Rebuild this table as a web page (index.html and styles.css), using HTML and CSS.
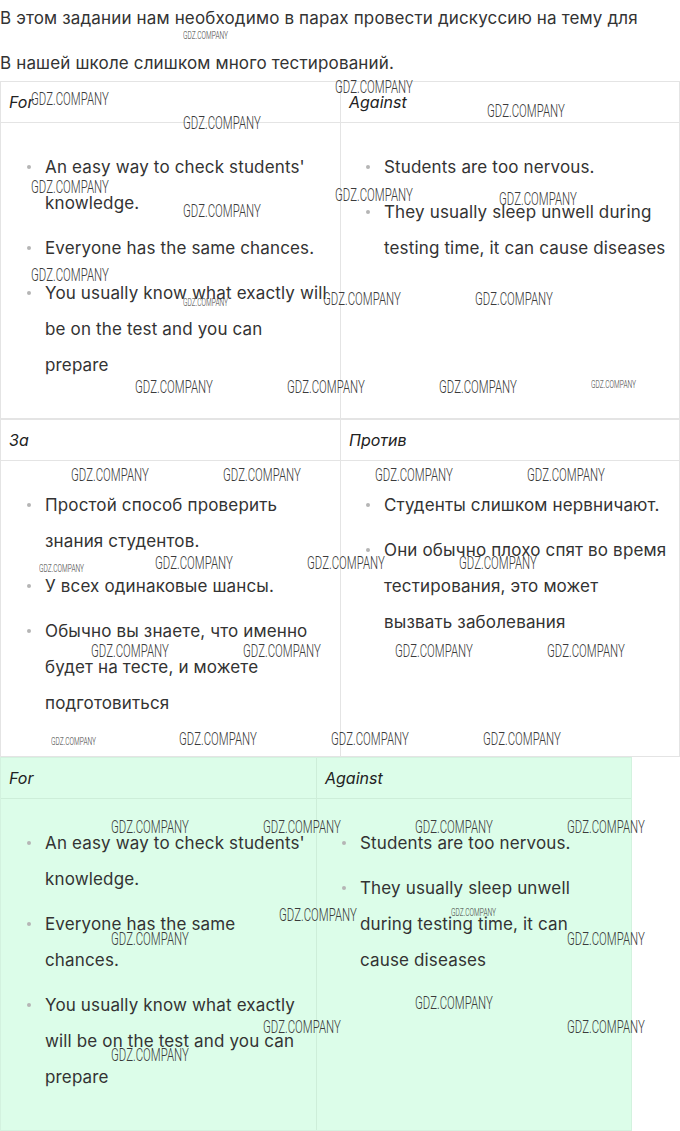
FILE: index.html
```html
<!DOCTYPE html>
<html lang="ru">
<head>
<meta charset="utf-8">
<title>Discussion</title>
<link rel="stylesheet" href="styles.css">
</head>
<body>
<div class="page">
  <p class="intro">В этом задании нам необходимо в парах провести дискуссию на тему для</p>
  <p class="intro">В нашей школе слишком много тестирований.</p>

  <div class="table">
    <div class="th">For</div>
    <div class="th">Against</div>
    <div class="td">
      <ul>
        <li>An easy way to check students' knowledge.</li>
        <li>Everyone has the same chances.</li>
        <li>You usually know what exactly will be on the test and you can prepare</li>
      </ul>
    </div>
    <div class="td">
      <ul>
        <li>Students are too nervous.</li>
        <li>They usually sleep unwell during testing time, it can cause diseases</li>
      </ul>
    </div>
  </div>

  <div class="table">
    <div class="th">За</div>
    <div class="th">Против</div>
    <div class="td">
      <ul>
        <li>Простой способ проверить знания студентов.</li>
        <li>У всех одинаковые шансы.</li>
        <li>Обычно вы знаете, что именно будет на тесте, и можете подготовиться</li>
      </ul>
    </div>
    <div class="td">
      <ul>
        <li>Студенты слишком нервничают.</li>
        <li>Они обычно плохо спят во время тестирования, это может вызвать заболевания</li>
      </ul>
    </div>
  </div>

  <div class="table table-green">
    <div class="th">For</div>
    <div class="th">Against</div>
    <div class="td">
      <ul>
        <li>An easy way to check students' knowledge.</li>
        <li>Everyone has the same chances.</li>
        <li>You usually know what exactly will be on the test and you can prepare</li>
      </ul>
    </div>
    <div class="td">
      <ul>
        <li>Students are too nervous.</li>
        <li>They usually sleep unwell during testing time, it can cause diseases</li>
      </ul>
    </div>
  </div>

  <div class="marks">
    <span class="wm sm" style="left:183px;top:31px">GDZ.COMPANY</span>
    <span class="wm" style="left:31px;top:91px">GDZ.COMPANY</span>
    <span class="wm" style="left:335px;top:79px">GDZ.COMPANY</span>
    <span class="wm" style="left:183px;top:115px">GDZ.COMPANY</span>
    <span class="wm" style="left:487px;top:103px">GDZ.COMPANY</span>
    <span class="wm" style="left:31px;top:179px">GDZ.COMPANY</span>
    <span class="wm" style="left:183px;top:203px">GDZ.COMPANY</span>
    <span class="wm" style="left:335px;top:187px">GDZ.COMPANY</span>
    <span class="wm" style="left:499px;top:191px">GDZ.COMPANY</span>
    <span class="wm" style="left:31px;top:267px">GDZ.COMPANY</span>
    <span class="wm sm" style="left:183px;top:298px">GDZ.COMPANY</span>
    <span class="wm" style="left:323px;top:291px">GDZ.COMPANY</span>
    <span class="wm" style="left:475px;top:291px">GDZ.COMPANY</span>
    <span class="wm" style="left:135px;top:379px">GDZ.COMPANY</span>
    <span class="wm" style="left:287px;top:379px">GDZ.COMPANY</span>
    <span class="wm" style="left:439px;top:379px">GDZ.COMPANY</span>
    <span class="wm sm" style="left:591px;top:380px">GDZ.COMPANY</span>
    <span class="wm" style="left:71px;top:467px">GDZ.COMPANY</span>
    <span class="wm" style="left:223px;top:467px">GDZ.COMPANY</span>
    <span class="wm" style="left:375px;top:467px">GDZ.COMPANY</span>
    <span class="wm" style="left:527px;top:467px">GDZ.COMPANY</span>
    <span class="wm sm" style="left:39px;top:564px">GDZ.COMPANY</span>
    <span class="wm" style="left:155px;top:555px">GDZ.COMPANY</span>
    <span class="wm" style="left:307px;top:555px">GDZ.COMPANY</span>
    <span class="wm" style="left:459px;top:555px">GDZ.COMPANY</span>
    <span class="wm" style="left:91px;top:643px">GDZ.COMPANY</span>
    <span class="wm" style="left:243px;top:643px">GDZ.COMPANY</span>
    <span class="wm" style="left:395px;top:643px">GDZ.COMPANY</span>
    <span class="wm" style="left:547px;top:643px">GDZ.COMPANY</span>
    <span class="wm sm" style="left:51px;top:737px">GDZ.COMPANY</span>
    <span class="wm" style="left:179px;top:731px">GDZ.COMPANY</span>
    <span class="wm" style="left:331px;top:731px">GDZ.COMPANY</span>
    <span class="wm" style="left:483px;top:731px">GDZ.COMPANY</span>
    <span class="wm" style="left:111px;top:819px">GDZ.COMPANY</span>
    <span class="wm" style="left:263px;top:819px">GDZ.COMPANY</span>
    <span class="wm" style="left:415px;top:819px">GDZ.COMPANY</span>
    <span class="wm" style="left:567px;top:819px">GDZ.COMPANY</span>
    <span class="wm" style="left:279px;top:907px">GDZ.COMPANY</span>
    <span class="wm sm" style="left:451px;top:908px">GDZ.COMPANY</span>
    <span class="wm" style="left:111px;top:931px">GDZ.COMPANY</span>
    <span class="wm" style="left:567px;top:931px">GDZ.COMPANY</span>
    <span class="wm" style="left:415px;top:995px">GDZ.COMPANY</span>
    <span class="wm" style="left:263px;top:1019px">GDZ.COMPANY</span>
    <span class="wm" style="left:567px;top:1019px">GDZ.COMPANY</span>
    <span class="wm" style="left:111px;top:1047px">GDZ.COMPANY</span>
  </div>
</div>
</body>
</html>
```

FILE: styles.css
```css
html, body {
  margin: 0;
  padding: 0;
  background: #ffffff;
}

.page {
  position: relative;
  width: 680px;
  font-family: Inter, "Noto Sans", sans-serif;
  font-size: 17px;
  letter-spacing: 0.15px;
  color: #333333;
}

.intro {
  margin: 0 0 9px 0;
  line-height: 36px;
  white-space: nowrap;
}

.intro + .intro {
  margin-bottom: 0;
}

.table {
  display: grid;
  grid-template-columns: 339px 1fr;
  width: 680px;
  box-sizing: border-box;
  border: 1px solid #e4e4e4;
  background: #ffffff;
}

.th {
  height: 40px;
  display: flex;
  align-items: center;
  padding: 0 8px;
  font-style: italic;
  font-weight: 400;
  font-size: 16px;
  letter-spacing: 0;
  color: #222222;
  border-bottom: 1px solid #e4e4e4;
}

.th:nth-child(2),
.td:nth-child(4) {
  border-left: 1px solid #e4e4e4;
}

.td {
  padding: 26px 12px 26px 0;
}

.td:nth-child(4) {
  padding-right: 9px;
}

.td ul {
  list-style: none;
  margin: 0;
  padding: 0 0 0 44px;
}

.td:nth-child(4) ul {
  padding-left: 43px;
}

.td li {
  position: relative;
  line-height: 36px;
  margin-bottom: 9px;
}

.td li::before {
  content: "";
  position: absolute;
  left: -18px;
  top: 16px;
  width: 4px;
  height: 4px;
  border-radius: 50%;
  background: #b5b5b5;
}

.table-green {
  width: 632px;
  grid-template-columns: 315px 1fr;
  background: #dcfde9;
  border-color: #d3f2df;
}

.table-green .td {
  padding-right: 10px;
}

.table-green .td:nth-child(4) {
  padding-right: 12px;
}

.table-green .th {
  border-bottom-color: #cdeed9;
}

.table-green .th:nth-child(2),
.table-green .td:nth-child(4) {
  border-left-color: #cdeed9;
}

.marks {
  position: absolute;
  left: 0;
  top: 0;
  width: 680px;
  height: 1131px;
  pointer-events: none;
}

.wm {
  position: absolute;
  font-family: Roboto, "Liberation Sans", sans-serif;
  font-weight: 300;
  font-size: 19px;
  line-height: 16px;
  letter-spacing: 0;
  color: #3a3a3a;
  white-space: nowrap;
  transform: scaleX(0.6);
  transform-origin: 0 0;
}

.wm.sm {
  font-size: 11px;
  line-height: 10px;
}
```
